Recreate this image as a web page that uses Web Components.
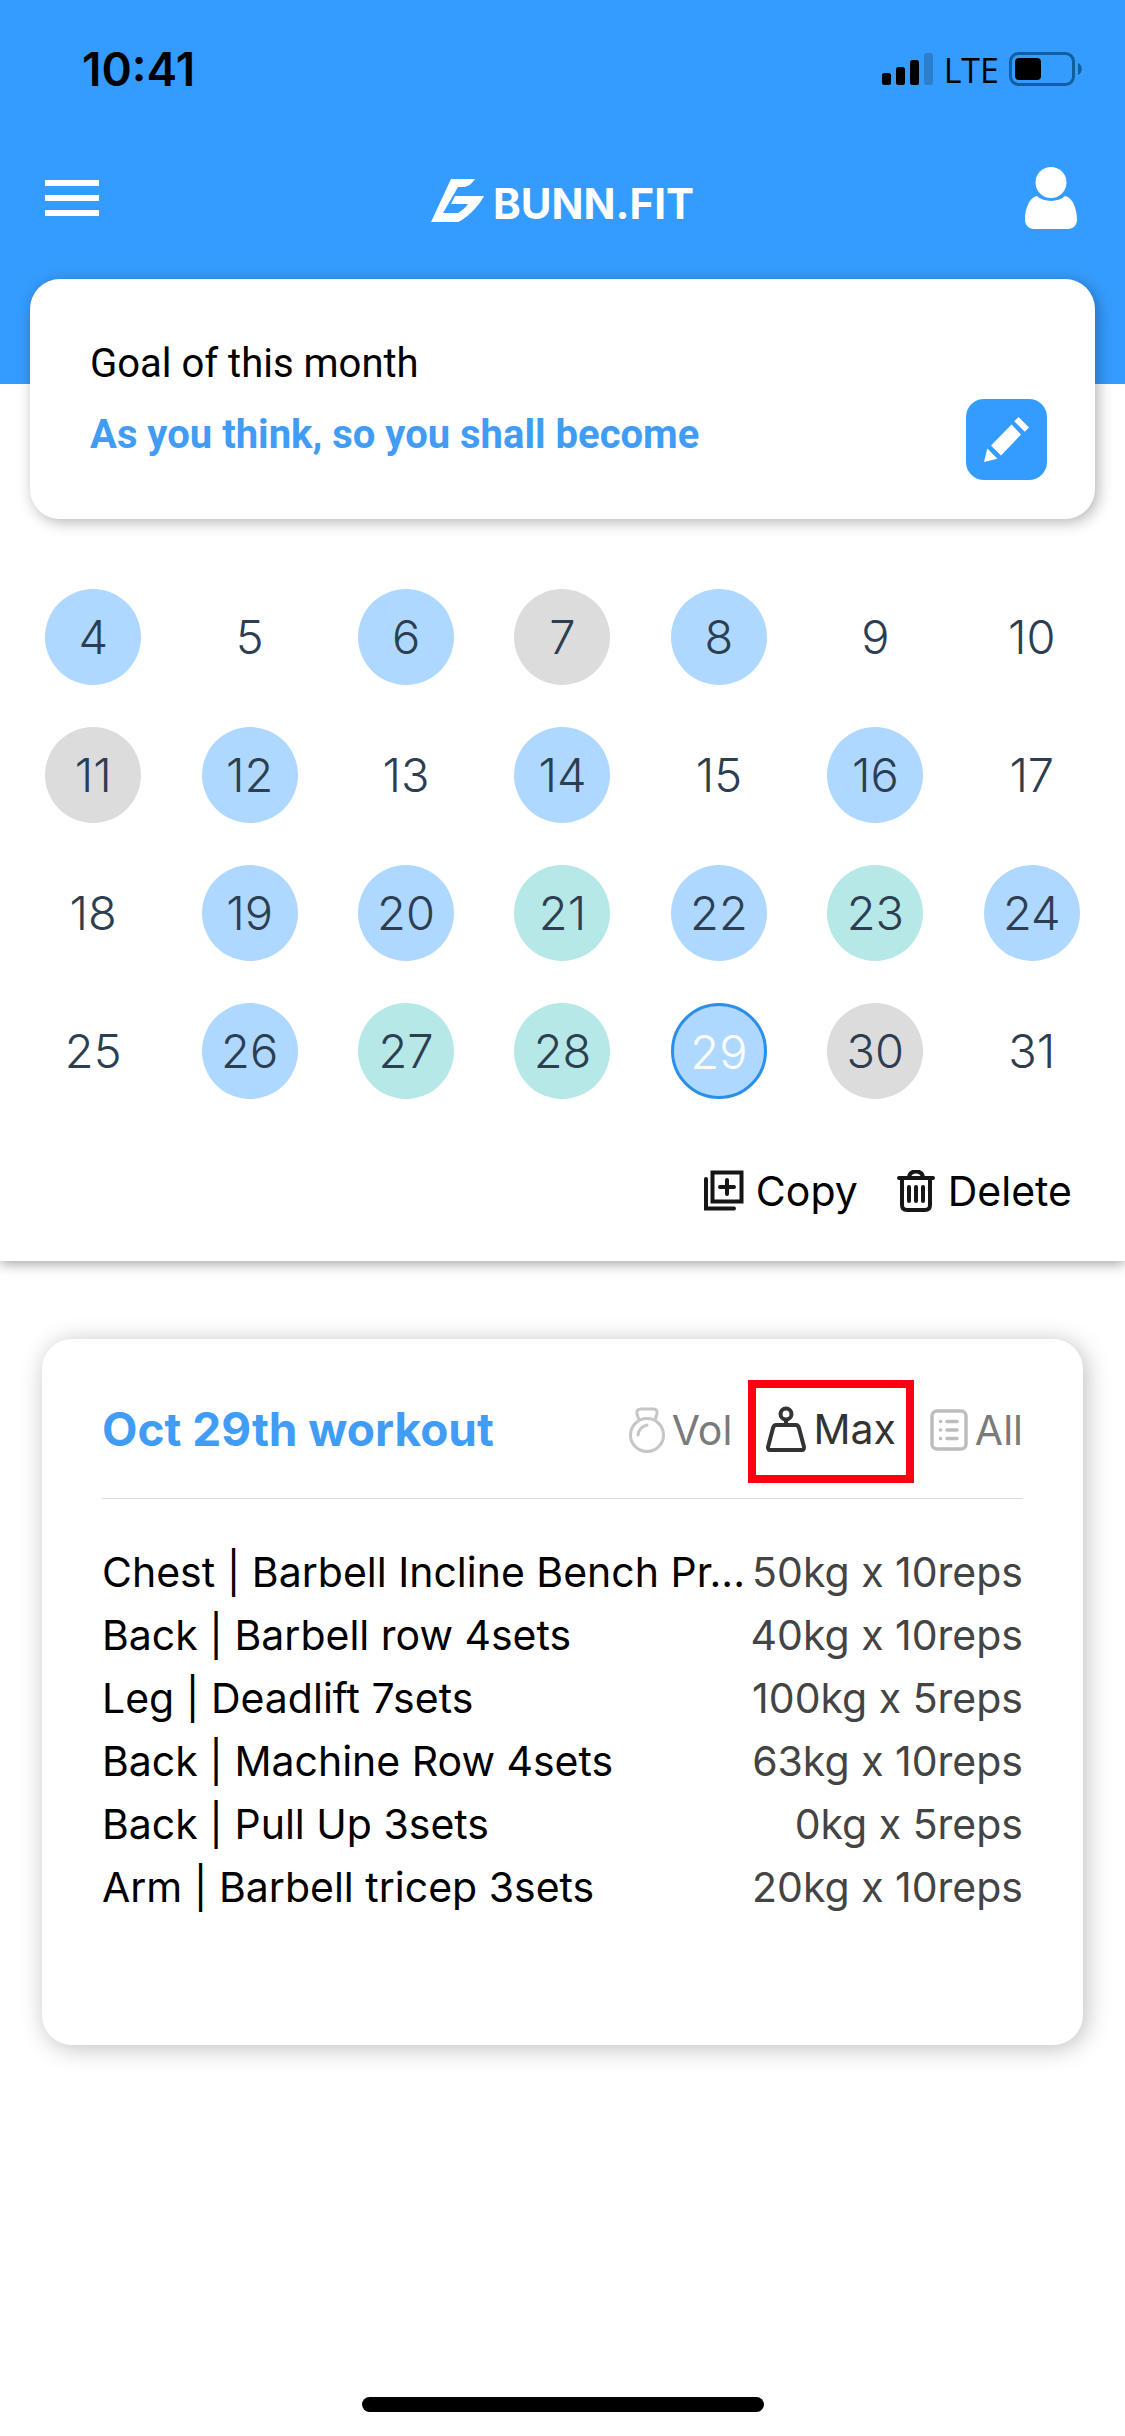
<!DOCTYPE html>
<html lang="en">
<head>
<meta charset="utf-8">
<meta name="viewport" content="width=device-width, initial-scale=1">
<title>BUNN.FIT</title>
<style>
  body { margin: 0; background: #fff; font-family: Inter, "Liberation Sans", sans-serif; color: #000; }
</style>
</head>
<body>
<fit-app></fit-app>

<template id="fit-app">
  <style>
    :host { display: flex; flex-direction: column; min-height: 100vh; --blue: #359cff; }
    .top { background: var(--blue); padding-bottom: 105px; }
    goal-card { margin: -105px 30px 0; }
    workout-card { margin: 78px 42px 40px; }
    home-indicator { margin-top: auto; }
  </style>
  <div class="top">
    <status-bar></status-bar>
    <app-header></app-header>
  </div>
  <goal-card>
    <span slot="label">Goal of this month</span>
    <span slot="goal">As you think, so you shall become</span>
  </goal-card>
  <month-panel></month-panel>
  <workout-card>
    <span slot="title">Oct 29th workout</span>
  </workout-card>
  <home-indicator></home-indicator>
</template>

<template id="status-bar">
  <style>
    :host { display: flex; justify-content: space-between; align-items: center; height: 138px; padding: 0 42px 0 82px; box-sizing: border-box; }
    .time { font-size: 46px; font-weight: 600; line-height: 54px; }
    .right { display: flex; align-items: center; gap: 10px; }
    .net { font: 400 34px/48px "Open Sans", "Noto Sans", sans-serif; padding-top: 2px; }
    svg { display: block; }
  </style>
  <span class="time">10:41</span>
  <div class="right">
    <svg width="52" height="34" viewBox="0 0 52 34"><rect x="0" y="21" width="9" height="12" rx="2.5"/><rect x="14" y="15" width="9" height="18" rx="2.5"/><rect x="28" y="8" width="9" height="25" rx="2.5"/><rect x="42" y="1" width="9" height="32" rx="2.5" fill="#2b7fcd"/></svg>
    <span class="net">LTE</span>
    <svg width="74" height="34" viewBox="0 0 74 34"><rect x="1.5" y="1.5" width="63" height="31" rx="8" fill="none" stroke="#125f9f" stroke-width="3"/><rect x="6" y="6" width="26" height="22" rx="4"/><path d="M69 11c5 2 5 10 0 12z" fill="#125f9f"/></svg>
  </div>
</template>

<template id="app-header">
  <style>
    :host { display: flex; justify-content: space-between; align-items: center; height: 120px; padding: 0 48px 0 45px; margin-bottom: 21px; color: #fff; }
    button { all: unset; display: block; width: 58px; }
    button.user svg { margin-left: auto; }
    a { display: flex; align-items: center; gap: 8px; color: #fff; text-decoration: none; font-size: 42px; font-weight: 700; line-height: 50px; padding: 12px 0 0 3px; }
    a svg { margin-bottom: 8px; }
    svg { display: block; }
  </style>
  <button type="button" aria-label="Menu"><svg width="54" height="36" viewBox="0 0 54 36" fill="#fff"><path d="M0 0h54v6H0zM0 15h54v6H0zM0 30h54v6H0z"/></svg></button>
  <a href="#"><svg width="54" height="43" viewBox="0 0 54 43" fill="#fff"><path d="M20 0h24c-4 6-8 8-12 8h-5L12 34h15c5-3 8-6 10-9H20l4-8h29C48 26 40 36 27.500 43H0z"/></svg><span>BUNN.FIT</span></a>
  <button class="user" type="button" aria-label="Profile"><svg width="52" height="62" viewBox="0 0 52 62" fill="#fff"><ellipse cx="26" cy="15.500" rx="15.500" ry="15.500"/><path d="M12 29c7 6.500 21 6.500 28 0 9 2 12 15 12 24 0 5-4 9-9 9H9c-5 0-9-4-9-9 0-9 3-22 12-24z"/></svg></button>
</template>

<template id="goal-card">
  <style>
    :host { display: flex; justify-content: space-between; align-items: flex-end; height: 240px; box-sizing: border-box; padding: 0 48px 39px 60px; border-radius: 30px; background: #fff; box-shadow: 3px 3px 15px rgba(0,0,0,.3); font-family: Roboto, sans-serif; }
    .text { display: flex; flex-direction: column; gap: 11px; padding-bottom: 15px; }
    .label { font-size: 40px; line-height: 60px; }
    .goal { font-size: 40px; line-height: 60px; font-weight: 700; color: #409cf5; }
    button { all: unset; display: grid; place-items: center; width: 81px; height: 81px; border-radius: 18px; background: var(--blue); }
  </style>
  <div class="text">
    <div class="label"><slot name="label"></slot></div>
    <div class="goal"><slot name="goal"></slot></div>
  </div>
  <button type="button" aria-label="Edit goal"><svg width="45" height="45" viewBox="0 0 45 45" fill="#fff"><path d="M34.500 0L45 10.500 40.800 14.700 30.300 4.200zM27.500 7.500L37 17.500 17 38.500 7 28.500zM3.300 31.500L13.500 41.800 0 45z"/></svg></button>
</template>

<template id="month-panel">
  <style>
    :host { display: block; padding: 70px 0 40px; box-shadow: 0 3px 12px rgba(0,0,0,.36); clip-path: inset(0 0 -30px 0); }
    .grid { display: grid; grid-template-columns: repeat(7, 1fr); row-gap: 42px; justify-items: center; padding: 0 15px; }
    .actions { display: flex; justify-content: flex-end; gap: 38px; padding: 62px 53px 0 0; }
  </style>
  <div class="grid"></div>
  <div class="actions">
    <icon-action><svg slot="icon" width="40" height="42" viewBox="0 0 40 42" fill="none" stroke="#161616" stroke-width="4"><path d="M8.500 2.500h29v29h-29zM2 9v29.500h28M16 17h14M23 10v14" stroke-linecap="round"/></svg>Copy</icon-action>
    <icon-action><svg slot="icon" width="40" height="42" viewBox="0 0 40 42" fill="none" stroke="#161616" stroke-width="4" stroke-linecap="round"><path d="M3 8h34M6 8v27q0 5 5 5h18q5 0 5-5V8M13 7q1-5.500 7-5.500T27 7M13 17v14M20 17v14M27 17v14"/></svg>Delete</icon-action>
  </div>
</template>

<template id="calendar-day">
  <style>
    :host { display: block; }
    button { all: unset; display: block; box-sizing: border-box; width: 96px; height: 96px; border-radius: 50%; text-align: center; font-size: 47px; font-weight: 300; line-height: 92px; color: #2c3e50; }
    :host([kind="done"]) button { background: #aed8ff; }
    :host([kind="rest"]) button { background: #dcdcdc; }
    :host([kind="light"]) button { background: #b6e8e8; }
    :host([selected]) button { border: 3px solid #2b8fea; color: #fff; }
  </style>
  <button type="button"><slot></slot></button>
</template>

<template id="icon-action">
  <style>
    :host { display: block; }
    button { all: unset; display: flex; align-items: center; gap: 12px; font-size: 41px; line-height: 60px; }
    ::slotted(svg) { display: block; }
  </style>
  <button type="button"><slot name="icon"></slot><span><slot></slot></span></button>
</template>

<template id="workout-card">
  <style>
    :host { display: block; box-sizing: border-box; padding: 41px 60px 126px; border-radius: 30px; background: #fff; box-shadow: 3px 3px 24px rgba(0,0,0,.26); }
    header { display: flex; justify-content: space-between; align-items: center; padding-bottom: 15px; border-bottom: 1px solid #ddd; }
    h2 { margin: 0; padding-bottom: 5px; font-size: 46px; line-height: 60px; font-weight: 700; color: #409cf5; }
    nav { display: flex; align-items: center; gap: 16px; }
    table { width: 100%; border-collapse: collapse; margin-top: 42px; }
    th, td { padding: 0; font-size: 41px; line-height: 63px; font-weight: 400; text-align: left; white-space: nowrap; }
    td { text-align: right; color: #444; }
  </style>
  <header>
    <h2><slot name="title"></slot></h2>
    <nav>
      <view-tab><svg slot="icon" width="36" height="46" viewBox="0 0 36 46" fill="none" stroke="#c6c6c6" stroke-width="3"><circle cx="18" cy="28" r="16.500"/><path d="M10 13L8 7Q7 2 12 2h12q5 0 4 5l-2 6M9 28q1-8 9-10" stroke-linecap="round"/></svg>Vol</view-tab>
      <view-tab active><svg slot="icon" width="40" height="46" viewBox="0 0 40 46" fill="none" stroke="#333" stroke-width="4" stroke-linejoin="round"><circle cx="20" cy="8" r="5.500"/><path d="M20 14v5M10 19h20q2 0 3 3l5 19q0 3-2 3H4q-2 0-2-3l5-19q1-3 3-3z"/></svg>Max</view-tab>
      <view-tab><svg slot="icon" width="38" height="42" viewBox="0 0 38 42" fill="none" stroke="#bdbdbd" stroke-width="3.500" stroke-linecap="round"><rect x="2" y="2" width="34" height="38" rx="5"/><path d="M17 12.500h10M17 21h10M17 29.500h10M10.500 12.500h.1M10.500 21h.1M10.500 29.500h.1"/></svg>All</view-tab>
    </nav>
  </header>
  <table><tbody></tbody></table>
</template>

<template id="view-tab">
  <style>
    :host { display: block; }
    button { all: unset; display: flex; align-items: center; gap: 7px; padding-bottom: 4px; font-size: 41px; line-height: 60px; color: #7a7a7a; }
    :host([active]) button { padding: 11px 10px 16px; border: 8px solid #ff0010; color: #333; }
    ::slotted(svg) { display: block; }
  </style>
  <button type="button"><slot name="icon"></slot><span><slot></slot></span></button>
</template>

<template id="home-indicator">
  <style>
    :host { display: flex; justify-content: center; padding-bottom: 24px; }
    div { width: 402px; height: 15px; border-radius: 8px; background: #000; }
  </style>
  <div></div>
</template>

<script>
  class Part extends HTMLElement {
    constructor() {
      super();
      const t = document.getElementById(this.localName);
      this.attachShadow({ mode: 'open' }).append(t.content.cloneNode(true));
    }
  }
  const days = { done: [4, 6, 8, 12, 14, 16, 19, 20, 22, 24, 26, 29], rest: [7, 11, 30], light: [21, 23, 27, 28] };
  class MonthPanel extends Part {
    constructor() {
      super();
      const grid = this.shadowRoot.querySelector('.grid');
      for (let n = 4; n <= 31; n++) {
        const day = document.createElement('calendar-day');
        day.textContent = n;
        for (const kind in days) if (days[kind].includes(n)) day.setAttribute('kind', kind);
        if (n === 29) day.setAttribute('selected', '');
        grid.append(day);
      }
    }
  }
  const sets = [
    ['Chest | Barbell Incline Bench Pr...', '50kg x 10reps'],
    ['Back | Barbell row 4sets', '40kg x 10reps'],
    ['Leg | Deadlift 7sets', '100kg x 5reps'],
    ['Back | Machine Row 4sets', '63kg x 10reps'],
    ['Back | Pull Up 3sets', '0kg x 5reps'],
    ['Arm | Barbell tricep 3sets', '20kg x 10reps']
  ];
  class WorkoutCard extends Part {
    constructor() {
      super();
      const body = this.shadowRoot.querySelector('tbody');
      for (const [name, load] of sets) {
        const row = body.insertRow();
        const th = document.createElement('th');
        th.scope = 'row';
        th.textContent = name;
        row.append(th);
        row.insertCell().textContent = load;
      }
    }
  }
  customElements.define('calendar-day', class extends Part {});
  customElements.define('icon-action', class extends Part {});
  customElements.define('view-tab', class extends Part {});
  customElements.define('status-bar', class extends Part {});
  customElements.define('app-header', class extends Part {});
  customElements.define('goal-card', class extends Part {});
  customElements.define('month-panel', MonthPanel);
  customElements.define('workout-card', WorkoutCard);
  customElements.define('home-indicator', class extends Part {});
  customElements.define('fit-app', class extends Part {});
</script>
</body>
</html>
